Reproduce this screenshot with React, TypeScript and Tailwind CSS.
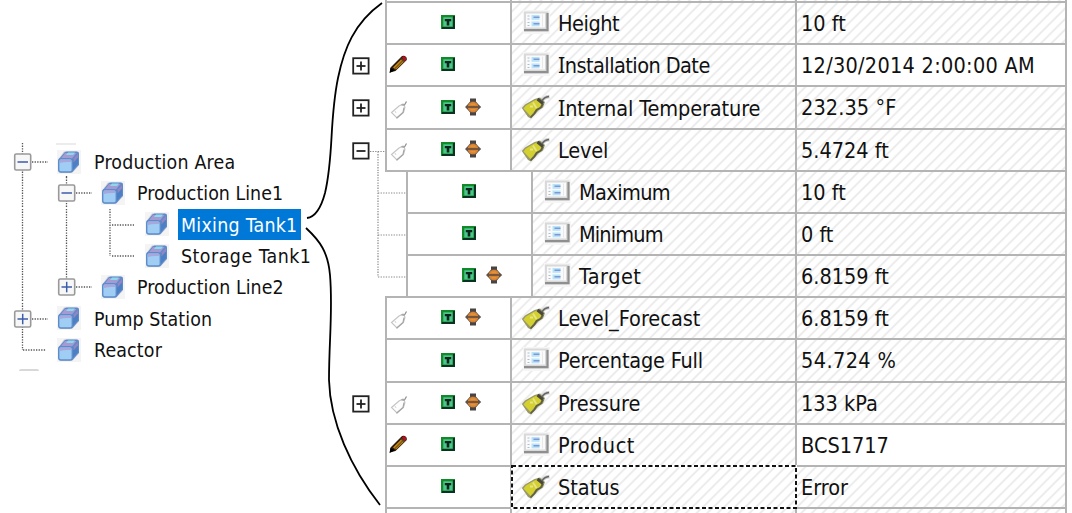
import type { ReactNode } from "react";

const FONT = "font-['DejaVu_Sans_Condensed','DejaVu_Sans',sans-serif] [font-stretch:condensed]";

type TreeNode = {
  label: string;
  depth: number;
  expander?: "plus" | "minus";
  selected?: boolean;
  tracking: string;
  guides: ReactNode;
};

const T = 31.33;

function V({ x, from = 0, to = T }: { x: number; from?: number; to?: number }) {
  return <line x1={x} x2={x} y1={from} y2={to} />;
}
function H({ from, to }: { from: number; to: number }) {
  return <line x1={from} x2={to} y1={16} y2={16} />;
}

const tree: TreeNode[] = [
  { label: "Production Area", depth: 0, expander: "minus", tracking: "tracking-[0.2px]", guides: <><V x={22.5} from={-3} /><H from={32} to={48} /><V x={66.5} from={30} /></> },
  { label: "Production Line1", depth: 1, expander: "minus", tracking: "tracking-[0.02px]", guides: <><V x={22.5} /><V x={66.5} /><H from={76} to={92} /></> },
  { label: "Mixing Tank1", depth: 2, selected: true, tracking: "tracking-[0.28px]", guides: <><V x={22.5} /><V x={66.5} /><V x={110} /><H from={112} to={134} /></> },
  { label: "Storage Tank1", depth: 2, tracking: "tracking-[0.48px]", guides: <><V x={22.5} /><V x={66.5} /><V x={110} to={16} /><H from={112} to={134} /></> },
  { label: "Production Line2", depth: 1, expander: "plus", tracking: "tracking-[0.06px]", guides: <><V x={22.5} /><V x={66.5} to={8} /><H from={76} to={92} /></> },
  { label: "Pump Station", depth: 0, expander: "plus", tracking: "tracking-[0.1px]", guides: <><V x={22.5} /><H from={32} to={48} /></> },
  { label: "Reactor", depth: 0, tracking: "tracking-[0.15px]", guides: <><V x={22.5} to={16} /><H from={23} to={46} /></> },
];

const guideWidth = [56, 100, 144];

function CubeIcon() {
  return (
    <svg width="26" height="26" viewBox="0 0 26 26" className="shrink-0">
      <rect x="1" y="1" width="24" height="24" fill="#f4f4f4" />
      <path d="M8 2.500h12.500q2.500.3 2.500 2.500v11.500L16 24H5q-2.500-.3-2.500-3V10z" fill="#c9cbd8" />
      <path d="M3 10 8.500 3.500q1-1 2.500-1h10q2 .2 2 2v11L16.500 23z" fill="#5c8bcb" />
      <path d="M9 4h11.500l-5 6H4.500z" fill="#a69ad3" />
      <path d="M12 3.500h7l-2 2.500h-7z" fill="#8ed8ed" />
      <path d="M16.500 11 22 4.500V15l-5.500 6z" fill="#4c7fc3" />
      <path d="M17.500 9.500 22 4.500v4l-4.500 5z" fill="#8f86c4" />
      <rect x="2.700" y="9.700" width="13.600" height="13.300" rx="2.200" fill="#a0cdf4" stroke="#5d8cca" strokeWidth="1.400" />
      <path d="M4 10.500h11v2.500h-3q-5 0-8 1z" fill="#a9a6dc" />
    </svg>
  );
}

function TreeExpander({ x, plus }: { x: number; plus: boolean }) {
  return (
    <g>
      <rect x={x - 7.8} y={8} width={16} height={16} rx={1.500} fill="#f7f7f7" stroke="#999" strokeWidth={1.600} />
      <path d={`M${x - 5} 16h10.500`} stroke="#3d5caa" strokeWidth={1.500} />
      {plus && <path d={`M${x + 0.2} 10.800v10.500`} stroke="#3d5caa" strokeWidth={1.500} />}
    </g>
  );
}

function Tree() {
  return (
    <div className="flex w-[340px] shrink-0 flex-col pt-[143px]">
      <div className="flex h-[3px] pl-[56px]">
        <div className="h-[2px] w-[20px] bg-[#ececec]" />
      </div>
      {tree.map((n) => (
        <div key={n.label} className="flex h-[31.33px] items-center">
          <svg width={guideWidth[n.depth]} height={T} viewBox={`0 0 ${guideWidth[n.depth]} ${T}`} className="shrink-0 overflow-visible">
            <g stroke="#555" strokeWidth={1.300} strokeDasharray="1.300 1.300">{n.guides}</g>
            {n.expander && <TreeExpander x={n.depth === 0 ? 22.5 : 66.5} plus={n.expander === "plus"} />}
          </svg>
          <CubeIcon />
          <div className={n.depth === 0 ? "pl-[9px]" : "pl-[8px]"}>
            <div className={`flex h-[31px] items-center whitespace-pre px-[3px] pt-[2px] text-[19.4px] ${n.tracking} ${n.selected ? "bg-[#0078d7] text-white" : "text-[#111]"}`}>
              <span>{n.label}</span>
            </div>
          </div>
        </div>
      ))}
      <div className="flex pl-[19px] pt-[4px]">
        <div className="h-[2px] w-[20px] rounded-t-full bg-[#d8d8d8]" />
      </div>
    </div>
  );
}

function ListIcon() {
  return (
    <svg width="27" height="24" viewBox="0 0 27 24" className="shrink-0">
      <rect x="0" y="0" width="27" height="24" fill="#f6f6f6" />
      <rect x="1" y="1.500" width="24.500" height="20" fill="#d9d9d9" />
      <path d="M1 20.200h23.500V3" stroke="#8f8f8f" strokeWidth="2.200" fill="none" />
      <rect x="3" y="3.500" width="19" height="14" fill="#fafafa" />
      <rect x="8.500" y="5" width="8" height="4.800" fill="#b7e4f8" />
      <rect x="8.500" y="11.500" width="8" height="4.800" fill="#b7e4f8" />
      <path d="M10.500 7.200h6M10.500 13.800h6" stroke="#8196d6" strokeWidth="1.600" />
      <path d="M4.500 6h2M4.500 9h2M4.500 12.500h2M4.500 15.500h2" stroke="#a9bfd6" strokeWidth="1.200" />
      <path d="M19.500 4.500v12" stroke="#e9e9e9" />
    </svg>
  );
}

function TagIcon() {
  return (
    <svg width="29" height="26" viewBox="0 0 29 26" className="shrink-0">
      <path d="M20 7.500q3-4.500 8.500-5" stroke="#cfcfcf" strokeWidth="3.500" fill="none" />
      <path d="M.8 14 4 10.500 13.500 5l5.500-1.500 5 4.500-2 5.500-4 2.500L10 24.500 7 23z" fill="#99996c" />
      <path d="M2.500 14.500 5 11.500 12.500 7l5-2 3.500 4-2 4-4.500 3-5 6z" fill="#d3d02f" />
      <path d="M12 8.500 15.500 14M9 12.500h3" stroke="#e6e58a" strokeWidth="1.800" />
      <path d="m9.500 23.500 4-4 2-3.500 4.500-2.500 2-4" stroke="#5f5f42" strokeWidth="1.700" fill="none" />
      <path d="m16.500 5 5.500 4.500" stroke="#484840" strokeWidth="3" />
      <path d="M21 7q2-4 7-4.500" stroke="#666" strokeWidth="1.600" fill="none" />
    </svg>
  );
}

function PencilIcon() {
  return (
    <svg width="19" height="20" viewBox="0 0 19 20">
      <path d="m.8 18.500.7-5L12 3Q13.500 1 16 2q2.500 1.500 1.800 4L6.500 17z" fill="#2b1a0a" />
      <path d="M4 13.500 12.500 5l3 2.200-8.500 8.300z" fill="#c88716" />
      <path d="m5.500 15 8.500-8.500" stroke="#7d5a14" strokeWidth="1.200" />
      <path d="m12.800 3.500 2-1.500 2.200 1.500v2.500l-1.500 1.500z" fill="#b31120" />
      <path d="m11.500 4.500 4 3.200" stroke="#554722" strokeWidth="1.400" />
      <path d="m.5 19 1-5 4.500 2.300z" fill="#000" />
    </svg>
  );
}

function PaleTagIcon() {
  return (
    <svg width="18" height="20" viewBox="0 0 18 20" fill="none">
      <path d="M1.500 12.500 9 6l4-2 2 3-1.500 5.500L7 18z" fill="#fdfdfd" stroke="#c4c4c4" strokeWidth="1.100" />
      <path d="M6.500 18.300 13 12.500l1-5" stroke="#a5a5a5" strokeWidth="1.200" />
      <path d="M11.500 5h3l2-3.500" stroke="#8c8c8c" strokeWidth="1.200" />
      <path d="m5 11 1 2" stroke="#cbe0c6" strokeWidth="1" />
    </svg>
  );
}

function TemplateIcon() {
  return (
    <svg width="14" height="14" viewBox="0 0 14 14">
      <rect width="14" height="14" fill="#128a2a" />
      <path d="M14 1v13H1v-2h11V1z" fill="#0a3220" />
      <rect x="2.300" y="2.300" width="9.200" height="9.200" fill="#4cc68c" />
      <path d="M3.800 4h6.400v2.300H8.300v4.200H5.700V6.300H3.800z" fill="#08251a" />
    </svg>
  );
}

function DiamondIcon() {
  return (
    <svg width="18" height="18" viewBox="0 0 18 18">
      <path d="M6 .5h6V4h-6zM6 14h6v3.500H6z" fill="#494443" />
      <path d="M1 9 3.500 6.500 6.500 3h5l3 3.500L17.200 9l-2.700 2.500-3 3.500h-5l-3-3.500z" fill="#5b5049" />
      <circle cx="9" cy="9" r="5.300" fill="#d98330" />
      <path d="M2.500 9h13" stroke="#6b5340" strokeWidth="1.800" />
      <path d="M6.500 6.200h5M6.500 11.800h5" stroke="#e99a46" />
    </svg>
  );
}

function GridExpander({ plus }: { plus: boolean }) {
  return (
    <svg width="18" height="18" viewBox="0 0 18 18">
      <rect x="1.200" y="1.200" width="15.400" height="15.400" fill="#fff" stroke="#222" strokeWidth="1.800" />
      <path d="M4.500 9h9" stroke="#222" strokeWidth="1.800" />
      {plus && <path d="M9 4.500v9" stroke="#222" strokeWidth="1.800" />}
    </svg>
  );
}

const HATCH = "bg-[repeating-linear-gradient(135deg,#fff_0px,#fff_4.3px,#ebebeb_5.6px,#ebebeb_6.2px,#fff_7.5px)]";

type Row = {
  name: string;
  value: string;
  h: string;
  nt?: string;
  vt?: string;
  expander?: "plus" | "minus";
  edit?: "pencil" | "tag";
  diamond?: boolean;
  icon: "list" | "tag";
  child?: boolean;
  plain?: boolean;
  last?: boolean;
  focus?: boolean;
};

const rows: Row[] = [
  { name: "Height", value: "10 ft", h: "h-[42px]", nt: "tracking-[-0.45px]", icon: "list" },
  { name: "Installation Date", value: "12/30/2014 2:00:00 AM", h: "h-[42px]", nt: "tracking-[-0.55px]", vt: "tracking-[0.27px]", expander: "plus", edit: "pencil", icon: "list", plain: true },
  { name: "Internal Temperature", value: "232.35 °F", h: "h-[43px]", nt: "tracking-[-0.1px]", vt: "tracking-[0.1px]", expander: "plus", edit: "tag", diamond: true, icon: "tag" },
  { name: "Level", value: "5.4724 ft", h: "h-[42px]", nt: "tracking-[-0.15px]", expander: "minus", edit: "tag", diamond: true, icon: "tag" },
  { name: "Maximum", value: "10 ft", h: "h-[42px]", nt: "tracking-[-0.6px]", icon: "list", child: true },
  { name: "Minimum", value: "0 ft", h: "h-[42px]", nt: "tracking-[-0.85px]", icon: "list", child: true },
  { name: "Target", value: "6.8159 ft", h: "h-[42px]", nt: "tracking-[0.5px]", diamond: true, icon: "list", child: true, last: true },
  { name: "Level_Forecast", value: "6.8159 ft", h: "h-[42px]", edit: "tag", diamond: true, icon: "tag" },
  { name: "Percentage Full", value: "54.724 %", h: "h-[43px]", nt: "tracking-[-0.2px]", vt: "tracking-[0.4px]", icon: "list" },
  { name: "Pressure", value: "133 kPa", h: "h-[42px]", expander: "plus", edit: "tag", diamond: true, icon: "tag" },
  { name: "Product", value: "BCS1717", h: "h-[42px]", nt: "tracking-[0.5px]", edit: "pencil", icon: "list", plain: true },
  { name: "Status", value: "Error", h: "h-[42px]", icon: "tag", focus: true },
];

function Label({ text, tracking = "" }: { text: string; tracking?: string }) {
  if (!text.startsWith("I")) return <span className={tracking}>{text}</span>;
  return (
    <span className={tracking}>
      <span className="font-['Noto_Sans']">I</span>
      {text.slice(1)}
    </span>
  );
}

function GridRow({ r }: { r: Row }) {
  return (
    <div className={`flex shrink-0 ${r.h}`}>
      <div className={`flex shrink-0 ${r.child ? "w-[66px]" : "w-[45px]"}`}>
        {r.expander && (
          <div className="flex h-[41px] w-[30px] items-center pl-[12px]">
            <GridExpander plus={r.expander === "plus"} />
          </div>
        )}
        {r.expander === "minus" && (
          <svg width="15" height="42" stroke="#888" strokeWidth="1.200" strokeDasharray="1.300 1.300">
            <path d="M0 21.500h15M8 21.500v20.500" />
          </svg>
        )}
        {r.child && (
          <svg width="66" height="42" className="overflow-visible">
            <path d={r.last ? "M38 0v21M38 21h28" : "M38 0v42M38 21h28"} stroke="#888" strokeWidth="1.200" strokeDasharray="1.300 1.300" fill="none" />
            {r.last && <path d="M45 41h21" stroke="#b4b4b4" strokeWidth="2" />}
          </svg>
        )}
      </div>
      <div className="flex w-[125px] shrink-0 border-b-2 border-l-2 border-[#b4b4b4] bg-white">
        <div className={`flex w-[54px] items-center ${r.edit === "tag" ? "pl-[3px] pt-[4px]" : "pb-[2px] pl-[2px]"}`}>
          {r.edit === "pencil" && <PencilIcon />}
          {r.edit === "tag" && <PaleTagIcon />}
        </div>
        <div className="flex items-center gap-[9px] pb-[2px]">
          <TemplateIcon />
          {r.diamond && <DiamondIcon />}
        </div>
      </div>
      <div className={`relative flex min-w-0 flex-1 items-center border-b-2 border-l-2 border-[#b4b4b4] pt-[1px] text-[21.5px] ${HATCH}`}>
        <div className={`flex w-[46px] shrink-0 ${r.icon === "list" ? "pb-[4px] pl-[11px]" : "pb-[2px] pl-[9px]"}`}>
          {r.icon === "list" ? <ListIcon /> : <TagIcon />}
        </div>
        <Label text={r.name} tracking={r.nt} />
        {r.focus && (
          <svg className="absolute -left-[1px] -top-[2px] overflow-visible" width="286" height="44" fill="none">
            <rect x="1" y="1" width="284" height="42" stroke="#fff" strokeWidth="2" />
            <rect x="1" y="1" width="284" height="42" stroke="#111" strokeWidth="2" strokeDasharray="4 2.500" />
          </svg>
        )}
      </div>
      <div className={`flex w-[272px] shrink-0 items-center border-x-2 border-b-2 border-[#b4b4b4] pl-[4px] pt-[1px] text-[21.5px] ${r.plain ? "bg-white" : HATCH}`}>
        <span className={r.vt}>{r.value}</span>
      </div>
    </div>
  );
}

function EdgeRow({ h }: { h: string }) {
  return (
    <div className={`flex shrink-0 pl-[45px] ${h}`}>
      <div className="w-[125px] border-l-2 border-[#b4b4b4] bg-white" />
      <div className={`flex-1 border-l-2 border-[#b4b4b4] ${HATCH}`} />
      <div className={`w-[272px] border-x-2 border-[#b4b4b4] ${HATCH}`} />
    </div>
  );
}

export default function App() {
  return (
    <div className={`relative flex h-[513px] w-[1072px] overflow-hidden bg-white leading-none text-[#111] ${FONT}`}>
      <Tree />
      <div className="flex w-[727px] shrink-0 flex-col whitespace-pre">
        <EdgeRow h="h-[1px]" />
        <div className="ml-[45px] h-[2px] shrink-0 bg-[#b4b4b4]" />
        {rows.map((r) => (
          <GridRow key={r.name} r={r} />
        ))}
        <EdgeRow h="h-[4px]" />
      </div>
      <svg className="pointer-events-none absolute left-0 top-0" width="1072" height="513" fill="none" stroke="#000" strokeWidth="1.800">
        <path d="M382 3C354 23 344 49 338 78C329 122 334 155 325 193C321 208 315 217 307 218" />
        <path d="M306 228C320 241 328 252 330 275C333 310 329 340 329 380C330 422 351 468 380 505" />
      </svg>
    </div>
  );
}
